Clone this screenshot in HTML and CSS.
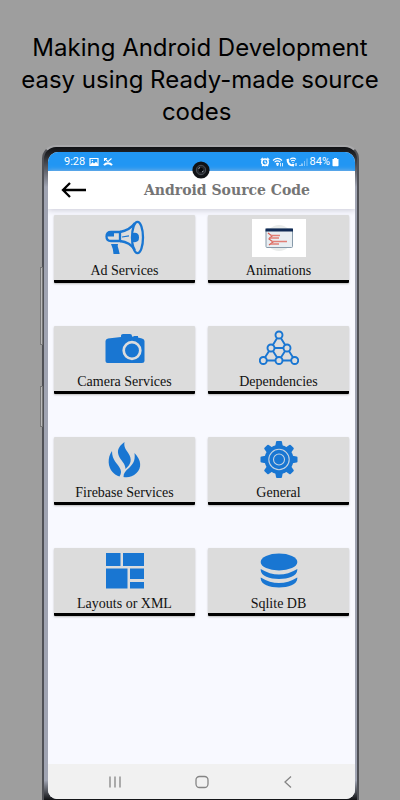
FILE: index.html
```
<!DOCTYPE html>
<html lang="en">
<head>
<meta charset="utf-8">
<meta name="viewport" content="width=device-width, initial-scale=1">
<title>Android Source Code</title>
<link rel="stylesheet" href="styles.css">
</head>
<body>
<h1 class="promo">Making Android Development<br>easy using Ready-made source<br>codes&nbsp;</h1>
<main class="phone">
  <span class="side volume"></span>
  <span class="side power"></span>
  <svg class="camera" viewBox="0 0 18 18" aria-hidden="true"><circle cx="9" cy="9" r="8.6" fill="#111316"/><circle cx="9" cy="9" r="4.7" fill="#25282d" stroke="#4b5057"/><circle cx="9" cy="9" r="2.2" fill="#08090b"/><path d="M6.5 7.5l1.5-1M10 11l1.5-1" stroke="#a3a9b1"/></svg>
  <div class="screen">
    <div class="status">
      <span>9:28</span>
      <svg width="10" height="10" viewBox="0 0 10 10"><path d="M1 1.500h8v7H1z" fill="none" stroke="#fff" stroke-width="1.200"/><path d="M1 8l2.500-3 1.500 1.600L7 4.800 9 7v1.500H1z" fill="#fff"/><circle cx="3.400" cy="3.500" r=".8" fill="#fff"/></svg>
      <svg width="10" height="10" viewBox="0 0 10 10" fill="none" stroke="#fff"><path d="M1.500 1.500L5 4.600l3.500-3.100M1.500 4V1.500H4" stroke-width="1.100"/><path d="M1 8.300c1.800-2.600 6.200-2.600 8 0" stroke-width="2"/></svg>
      <span class="status-right">
        <svg width="10" height="10" viewBox="0 0 10 10" fill="none" stroke="#fff"><circle cx="5" cy="5.200" r="3.200" stroke-width="1.600"/><path d="M5 3.500v2l1.400.8M.8 2.800L2.800.8M9.200 2.800L7.200.8M2 9l1-1M8 9L7 8" stroke-width="1.100"/></svg>
        <svg width="12" height="10" viewBox="0 0 12 10" fill="none" stroke="#fff"><path d="M1 3.500c3-2.800 6-2.800 9 0M2.600 5.200c2-1.800 3.800-1.800 5.800 0M4.200 6.900c1-.8 1.700-.8 2.600 0" stroke-width="1.100"/><path d="M5.500 9L4.600 7.600h1.800zM8.500 6v3.400M10.500 6v3.400" fill="#fff" stroke-width=".8"/></svg>
        <svg width="11" height="10" viewBox="0 0 11 10" fill="none" stroke="#fff"><path d="M1.500 2c0 4 2.500 6.500 6.400 6.500M1.500 2l1.200 1.800M8 8.500L6.300 7.200" stroke-width="2"/><path d="M4 2.400c2-1.700 4-1.700 6 0M5.200 4c1.200-1 2.400-1 3.600 0M7 5v1M10 6v3" stroke-width="1.100"/></svg>
        <svg width="9" height="10" viewBox="0 0 9 10" fill="none" stroke="#fff"><path d="M1 8v1M3 6.500V9"/><path d="M5.500 4v5M8 1.500V9" opacity=".45"/></svg>
        <span>84%</span>
        <svg width="7" height="10" viewBox="0 0 7 10" fill="#fff"><path d="M2 1h3v1h1.500v6.500a.7.7 0 0 1-.7.7H1.200a.7.7 0 0 1-.7-.7V2H2z"/></svg>
      </span>
    </div>
    <header class="bar">
      <button class="back" aria-label="Back"><svg width="26" height="16" viewBox="0 0 26 16" fill="none" stroke="#000" stroke-width="2.300"><path d="M25 8H2M9 1L2 8l7 7"/></svg></button>
      <h2>Android Source Code</h2>
    </header>
    <nav class="grid" aria-label="Categories">
      <a class="card" href="#ads">
        <svg viewBox="0 0 40 38" fill="none" stroke="#1976d2" stroke-width="2.300"><path d="M15 13H6q-4.500 0-4.500 4.500T6 22h9z"/><path d="M2 17.500q0-4 4-4h3v4z" fill="#1976d2" stroke="none"/><path d="M15 13Q25 11 30 4M15 22q10 1 15 9"/><ellipse cx="32.500" cy="18.500" rx="5.500" ry="15.700"/><path d="M28 14q6-1 6 4.500t-6 4.500q-2-4.500 0-9z" fill="#1976d2" stroke="none"/><path d="M6 25h7q-1 2 .5 5l1.200 5H8.500Q8 29 6 25z" fill="#1976d2" stroke="none"/><path d="M17 18l7-1.200" stroke-width="1.200"/></svg>
        <span>Ad Services</span>
      </a>
      <a class="card" href="#animations">
        <svg class="wide" viewBox="0 0 54 38"><path d="M0 0h54v38H0z" fill="#fff"/><circle cx="27" cy="19" r="13" fill="#e9eceb"/><rect x="14" y="10" width="26.500" height="18.500" rx="1" fill="#e8eef2" stroke="#879aaa"/><path d="M13.500 9.500h27.500v3h-27.500z" fill="#102a55"/><path d="M16 14l4 3-3 3 4 3-4 3" fill="none" stroke="#d95f55" stroke-width="1.200"/><path d="M19 16.500h9M17 19h10M20 22.500h15M18 25h9" stroke="#e17f76" stroke-width="1.500"/></svg>
        <span>Animations</span>
      </a>
      <a class="card" href="#camera">
        <svg viewBox="0 0 40 38" fill="#1976d2"><path d="M3 8.500l13-1.500V5.500Q16 4 18 4h7q2 0 2 2v.7l2-.5V6h4v1.500l4 1q2.500.5 2.500 2.500v20q0 2-2.500 2H2.500Q.5 33 .5 31V11Q.5 9 3 8.500z"/><circle cx="27" cy="20.500" r="8.300" stroke="#ddd" stroke-width="2.700"/></svg>
        <span>Camera Services</span>
      </a>
      <a class="card" href="#dependencies">
        <svg viewBox="0 0 40 38" stroke="#1976d2" stroke-width="1.900" fill="#ddd"><path fill="none" d="M20 5l-8 13L4 30.500h32L28 18 20 5M12 18h16M12 18l8 12.500L28 18"/><circle cx="20" cy="5" r="3.500"/><circle cx="12" cy="18" r="3.500"/><circle cx="28" cy="18" r="3.500"/><circle cx="4.300" cy="30.500" r="3.500"/><circle cx="20" cy="30.500" r="3.500"/><circle cx="35.700" cy="30.500" r="3.500"/></svg>
        <span>Dependencies</span>
      </a>
      <a class="card" href="#firebase">
        <svg viewBox="0 0 40 38" fill="#1976d2"><path d="M7 10c-5 7-4 16 .5 21 2 2.300 4 3.500 7 4.500 2-3 2-6 0-9-2-4-7.500-7-7.500-16.500z"/><path d="M19.500 1c-4 3-8 7-6 13 1.500 5 7 8 7 14 6-5 6.500-10 3-15.500C21 8.500 18.500 6 19.500 1z"/><path d="M29.500 12c7 7 7.500 15 2 20-4 4-9 5-13 4 0-4 2-6 5.500-9 4-4 6.500-7 5.500-15z"/></svg>
        <span>Firebase Services</span>
      </a>
      <a class="card" href="#general">
        <svg viewBox="0 0 40 38"><g fill="#1976d2"><circle cx="20" cy="18.500" r="14.500"/><path id="tooth" d="M17 1q0-1 1-1h4q1 0 1 1l1 5.500h-8zM17 36q0 1 1 1h4q1 0 1-1l1-5.500h-8z"/><use href="#tooth" transform="rotate(45 20 18.500)"/><use href="#tooth" transform="rotate(90 20 18.500)"/><use href="#tooth" transform="rotate(135 20 18.500)"/></g><circle cx="20" cy="18.500" r="10.200" fill="none" stroke="#c5d3e2" stroke-width="1.100"/><circle cx="20" cy="18.500" r="5.500" fill="none" stroke="#c5d3e2" stroke-width="1.100"/></svg>
        <span>General</span>
      </a>
      <a class="card" href="#layouts">
        <svg viewBox="0 0 40 38" fill="#1976d2"><path d="M1 1h14.500v13H1zM18 1h21v13H18zM1 16.500h21.500v20H1zM25 16.500h14v10.500H25zM25 30h14v6.500H25z"/></svg>
        <span>Layouts or XML</span>
      </a>
      <a class="card" href="#sqlite">
        <svg viewBox="0 0 40 38" fill="#1976d2"><ellipse cx="20" cy="10" rx="18.300" ry="8.500"/><path d="M1.700 17q18.300 11 36.600 0v1c0 12-36.600 12-36.600 0zM1.700 25.500q18.300 11 36.600 0v1c0 12-36.600 12-36.600 0z"/></svg>
        <span>Sqlite DB</span>
      </a>
    </nav>
    <footer class="system">
      <button aria-label="Recent apps"><svg width="14" height="14" viewBox="0 0 14 14" stroke="#858585" stroke-width="1.300"><path d="M2 1.500v11M7 1.500v11M12 1.500v11"/></svg></button>
      <button aria-label="Home"><svg width="14" height="14" viewBox="0 0 14 14" fill="none" stroke="#858585" stroke-width="1.300"><rect x="1" y="1.500" width="12" height="11" rx="3.500"/></svg></button>
      <button aria-label="Previous"><svg width="14" height="14" viewBox="0 0 14 14" fill="none" stroke="#858585" stroke-width="1.300"><path d="M10 1.500L4 7l6 5.500"/></svg></button>
    </footer>
  </div>
</main>
</body>
</html>
```
FILE: styles.css
```
* { box-sizing: border-box; }
body {
  margin: 0;
  min-height: 100vh;
  display: flex;
  flex-direction: column;
  background: #9e9e9e;
  font-family: Roboto, sans-serif;
}
button { border: 0; padding: 0; background: none; display: flex; align-items: center; justify-content: center; }
.promo {
  margin: 0;
  padding: 32px 0 17px;
  font: 400 24px/32px Inter, sans-serif;
  text-align: center;
  white-space: nowrap;
  color: #000;
}
.phone {
  position: relative;
  flex: 1;
  display: flex;
  margin: 0 41px 0 42px;
  padding: 5px 2px 0 4px;
  border: 2px solid #505156;
  border-top-color: #a9a9ab;
  border-bottom: 0;
  border-radius: 14px 14px 0 0;
  background: linear-gradient(#101114 0, #25272b 8px, #a0a4b2 40px, #a0a4b2 97%, #101114 100%);
}
.side { position: absolute; left: -4px; width: 3px; border: 1px solid #777; background: #bbb; }
.volume { top: 120px; height: 78px; }
.power { top: 239px; height: 41px; }
.camera { position: absolute; top: 14px; left: 50%; width: 18px; height: 18px; margin-left: -9px; z-index: 1; }
.screen {
  flex: 1;
  display: flex;
  flex-direction: column;
  margin-bottom: 1px;
  border-radius: 10px 10px 9px 9px;
  overflow: hidden;
  background: #f8f9ff;
}
.status {
  display: flex;
  align-items: center;
  gap: 4px;
  height: 19px;
  padding: 0 16px;
  background: #2196f3;
  color: #fff;
  font-size: 11px;
}
.status-right { display: flex; align-items: center; gap: 2px; margin-left: auto; }
.bar {
  display: flex;
  align-items: center;
  height: 38px;
  padding-left: 13px;
  background: #fff;
  box-shadow: 0 1px 6px #c8c8d4;
}
.bar h2 {
  flex: 1;
  margin: 0;
  padding-left: 12px;
  text-align: center;
  font: 900 14px/20px "DejaVu Serif", serif;
  color: #757575;
}
.grid {
  flex: 1;
  display: grid;
  grid-template-columns: 1fr 1fr;
  grid-auto-rows: max-content;
  gap: 43px 13px;
  padding: 6px;
}
.card {
  display: flex;
  flex-direction: column;
  align-items: center;
  gap: 4px;
  height: 68px;
  padding-top: 4px;
  border-bottom: 3px solid #000;
  border-radius: 1px;
  background: #dcdcdc;
  box-shadow: 0 1px 2px #bbb;
  color: #111;
  font: 14px/20px "Liberation Serif", serif;
  text-decoration: none;
}
.card svg { flex: none; width: 40px; height: 38px; }
.card .wide { width: 54px; }
.system { display: flex; justify-content: space-between; height: 35px; padding: 0 60px; background: #f1f1f1; }
```
